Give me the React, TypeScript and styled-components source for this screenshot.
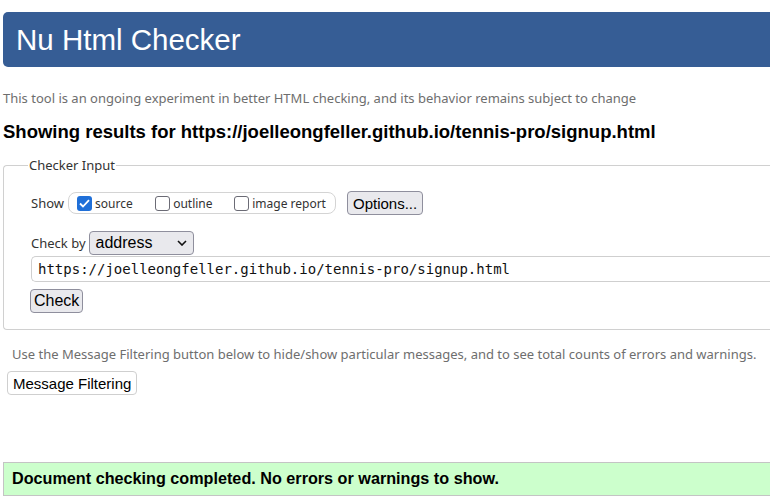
import React from "react";
import styled, { createGlobalStyle } from "styled-components";

const Global = createGlobalStyle`
  html, body { margin: 0; padding: 0; background: #fff; overflow: hidden; }
  body { font-family: "Liberation Sans", Arial, sans-serif; color: #000; }
`;

const Page = styled.div`
  width: 800px;
  padding: 12px 0 0 3px;
  box-sizing: border-box;
`;

const Banner = styled.header`
  height: 55px;
  background: #365d95;
  border-radius: 5px 0 0 5px;
  display: flex;
  align-items: center;
  padding-left: 13px;
  box-sizing: border-box;
`;

const Title = styled.h1`
  margin: 0;
  font-family: "Liberation Sans", Arial, sans-serif;
  font-weight: 400;
  font-size: 29.5px;
  color: #fff;
  line-height: 1;
  padding-top: 1px;
`;

const Note = styled.p<{ $indent?: number; $mt?: number }>`
  margin: ${(p) => p.$mt ?? 0}px 0 0 0;
  font-family: "Noto Sans", "Open Sans", sans-serif;
  font-size: 13px;
  color: #6e6e6e;
  line-height: 18px;
  padding-left: ${(p) => p.$indent ?? 0}px;
`;

const Heading = styled.h2`
  margin: 14px 0 0 0;
  font-family: "Liberation Sans", Arial, sans-serif;
  font-weight: 700;
  font-size: 18.5px;
  line-height: 22px;
`;

const Fieldset = styled.fieldset`
  margin: 13px 0 0 0;
  padding: 5px 0 16px 27px;
  border: 1px solid #d0d0d0;
  border-right: none;
  border-radius: 4px 0 0 4px;
  min-width: 0;
`;

const Legend = styled.legend`
  font-family: "Noto Sans", "Open Sans", sans-serif;
  font-size: 13px;
  color: #333;
  padding: 0 1px;
  margin-left: -3px;
`;

const Row = styled.div<{ $mt?: number }>`
  display: flex;
  align-items: center;
  margin-top: ${(p) => p.$mt ?? 0}px;
`;

const Label = styled.span`
  font-family: "Noto Sans", "Open Sans", sans-serif;
  font-size: 13px;
  color: #333;
`;

const Group = styled.div`
  display: flex;
  align-items: center;
  height: 22px;
  box-sizing: border-box;
  border: 1px solid #d4d4d4;
  border-radius: 8px;
  margin-left: 4px;
  padding: 0 8px;
  width: 268px;
`;

const Option = styled.label<{ $w: number }>`
  display: flex;
  align-items: center;
  gap: 3px;
  width: ${(p) => p.$w}px;
  font-family: "Noto Sans", "Open Sans", sans-serif;
  font-size: 12px;
  color: #333;
`;

const Box = styled.span<{ $on?: boolean }>`
  width: 15px;
  height: 15px;
  box-sizing: border-box;
  border-radius: 3px;
  border: ${(p) => (p.$on ? "none" : "1.5px solid #6b6b75")};
  background: ${(p) => (p.$on ? "#1f6fd8" : "#fff")};
  display: inline-flex;
  align-items: center;
  justify-content: center;
`;

const Button = styled.button<{ $light?: boolean; $size?: number; $ml?: number; $px?: number }>`
  font-family: "Liberation Sans", Arial, sans-serif;
  font-size: ${(p) => p.$size ?? 15}px;
  color: #000;
  background: ${(p) => (p.$light ? "#fff" : "#e9e9ed")};
  border: 1px solid ${(p) => (p.$light ? "#cfcfcf" : "#8f8f9d")};
  border-radius: 4px;
  height: 24px;
  padding: 0 ${(p) => p.$px ?? 5}px;
  margin-left: ${(p) => p.$ml ?? 0}px;
  line-height: 1;
  box-sizing: border-box;
`;

const Select = styled.div`
  display: flex;
  align-items: center;
  justify-content: space-between;
  width: 105px;
  height: 24px;
  box-sizing: border-box;
  margin-left: 3px;
  padding: 0 6px 0 6px;
  background: #e9e9ed;
  border: 1px solid #8f8f9d;
  border-radius: 4px;
  font-family: "Liberation Sans", Arial, sans-serif;
  font-size: 16px;
`;

const UrlInput = styled.div`
  margin-top: 1px;
  height: 26px;
  box-sizing: border-box;
  border: 1px solid #cfcfcf;
  border-right: none;
  border-radius: 5px 0 0 5px;
  padding-left: 6px;
  display: flex;
  align-items: center;
  font-family: "DejaVu Sans Mono", "Liberation Mono", monospace;
  font-size: 14px;
  color: #111;
`;

const Success = styled.div`
  margin-top: 67px;
  height: 34px;
  background: #ccffcc;
  border: 1px solid #c4c4c4;
  border-right: none;
  box-sizing: border-box;
  display: flex;
  align-items: center;
  padding-left: 8px;
  padding-bottom: 1px;
  font-family: "Liberation Sans", Arial, sans-serif;
  font-weight: 700;
  font-size: 16.2px;
`;

const Check = () => (
  <svg width="11" height="9" viewBox="0 0 11 9">
    <path d="M1 4.5 L4 7.5 L10 1.2" fill="none" stroke="#fff" strokeWidth="1.8" />
  </svg>
);

const Chevron = () => (
  <svg width="10" height="6" viewBox="0 0 10 6">
    <path d="M1 1 L5 5 L9 1" fill="none" stroke="#111" strokeWidth="1.6" />
  </svg>
);

export default function App() {
  return (
    <>
      <Global />
      <Page>
        <Banner>
          <Title>Nu Html Checker</Title>
        </Banner>
        <Note $mt={22}>
          This tool is an ongoing experiment in better HTML checking, and its behavior remains subject to change
        </Note>
        <Heading>Showing results for https://joelleongfeller.github.io/tennis-pro/signup.html</Heading>
        <Fieldset>
          <Legend>Checker Input</Legend>
          <Row $mt={12}>
            <Label>Show</Label>
            <Group>
              <Option $w={80}>
                <Box $on>
                  <Check />
                </Box>
                source
              </Option>
              <Option $w={81}>
                <Box />
                outline
              </Option>
              <Option $w={95}>
                <Box />
                image report
              </Option>
            </Group>
            <Button $ml={11}>Options...</Button>
          </Row>
          <Row $mt={16}>
            <Label>Check by</Label>
            <Select>
              address
              <Chevron />
            </Select>
          </Row>
          <UrlInput>https://joelleongfeller.github.io/tennis-pro/signup.html</UrlInput>
          <Row $mt={7}>
            <Button $size={16} $px={3} $ml={-1}>Check</Button>
          </Row>
        </Fieldset>
        <Note $indent={9} $mt={15}>
          Use the Message Filtering button below to hide/show particular messages, and to see total counts of errors and warnings.
        </Note>
        <Row $mt={8}>
          <Button $light $ml={4}>Message Filtering</Button>
        </Row>
        <Success>Document checking completed. No errors or warnings to show.</Success>
      </Page>
    </>
  );
}
